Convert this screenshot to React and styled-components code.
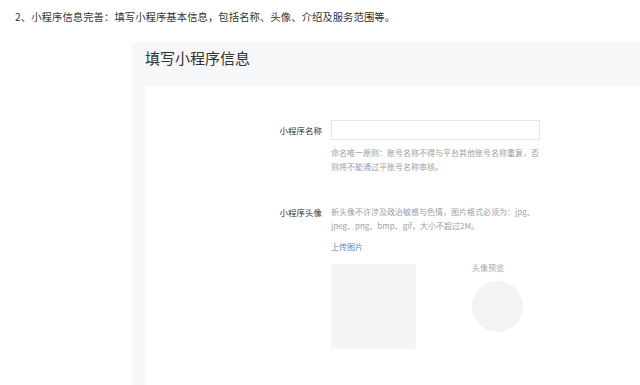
import React from 'react';
import styled, { createGlobalStyle } from 'styled-components';

const GlobalStyle = createGlobalStyle`
  html, body {
    margin: 0;
    padding: 0;
    background: #fff;
    font-family: "Noto Sans CJK SC", "Noto Sans", sans-serif;
  }
`;

const Page = styled.div`
  width: 640px;
  height: 385px;
  overflow: hidden;
  display: flex;
  flex-direction: column;
`;

const Intro = styled.p`
  margin: 0;
  padding: 10px 0 0 15px;
  font-size: 10.3px;
  letter-spacing: 0.1px;
  line-height: 14px;
  color: #333;
`;

const Panel = styled.section`
  flex: 1;
  margin: 18px 0 0 132px;
  padding-left: 13px;
  background: #f6f7f9;
  display: flex;
  flex-direction: column;
`;

const PanelTitle = styled.h2`
  margin: 0;
  height: 44px;
  padding-top: 8px;
  box-sizing: border-box;
  font-size: 15px;
  line-height: 16px;
  font-weight: normal;
  color: #333;
`;

const Card = styled.div`
  flex: 1;
  background: #fff;
  padding-top: 34px;
  display: flex;
  flex-direction: column;
  gap: 31px;
`;

const FormRow = styled.div`
  display: grid;
  grid-template-columns: 177px 1fr;
  column-gap: 9px;
  align-items: start;
`;

const Label = styled.label`
  text-align: right;
  font-size: 8.5px;
  line-height: ${(p) => p.$lh || 14}px;
  color: #333;
`;

const Field = styled.div`
  display: flex;
  flex-direction: column;
  align-items: flex-start;
`;

const Input = styled.input`
  width: 209px;
  height: 20px;
  box-sizing: border-box;
  border: 1px solid #e6e6e6;
  background: #fff;
  outline: none;
  margin: 0;
`;

const Hint = styled.div`
  width: 212px;
  margin-top: ${(p) => p.$gap || 0}px;
  font-size: 8px;
  line-height: 14px;
  color: #a0a0a0;
`;

const UploadLink = styled.a`
  margin-top: 7px;
  font-size: 8px;
  line-height: 14px;
  color: #5f7fbd;
  text-decoration: none;
  cursor: pointer;
`;

const PreviewRow = styled.div`
  display: flex;
  align-items: flex-start;
  gap: 56px;
  margin-top: 7px;
`;

const UploadBox = styled.div`
  width: 85px;
  height: 85px;
  margin-top: 3px;
  background: #f3f4f6;
  border: 1px solid #f6f7f8;
  box-sizing: border-box;
`;

const PreviewCol = styled.div`
  display: flex;
  flex-direction: column;
  align-items: flex-start;
`;

const PreviewLabel = styled.span`
  font-size: 8px;
  line-height: 14px;
  color: #a8a8a8;
`;

const Avatar = styled.div`
  width: 51px;
  height: 51px;
  margin-top: 6px;
  border-radius: 50%;
  background: #f2f3f5;
`;

export default function App() {
  return (
    <Page>
      <GlobalStyle />
      <Intro>2、小程序信息完善：填写小程序基本信息，包括名称、头像、介绍及服务范围等。</Intro>
      <Panel>
        <PanelTitle>填写小程序信息</PanelTitle>
        <Card>
          <FormRow>
            <Label $lh={20}>小程序名称</Label>
            <Field>
              <Input type="text" />
              <Hint $gap={6}>
                命名唯一原则：账号名称不得与平台其他账号名称重复，否则将不能通过平账号名称审核。
              </Hint>
            </Field>
          </FormRow>
          <FormRow>
            <Label>小程序头像</Label>
            <Field>
              <Hint>
                新头像不许涉及政治敏感与色情，图片格式必须为：jpg、jpeg、png、bmp、gif，大小不超过2M。
              </Hint>
              <UploadLink>上传图片</UploadLink>
              <PreviewRow>
                <UploadBox />
                <PreviewCol>
                  <PreviewLabel>头像预览</PreviewLabel>
                  <Avatar />
                </PreviewCol>
              </PreviewRow>
            </Field>
          </FormRow>
        </Card>
      </Panel>
    </Page>
  );
}
